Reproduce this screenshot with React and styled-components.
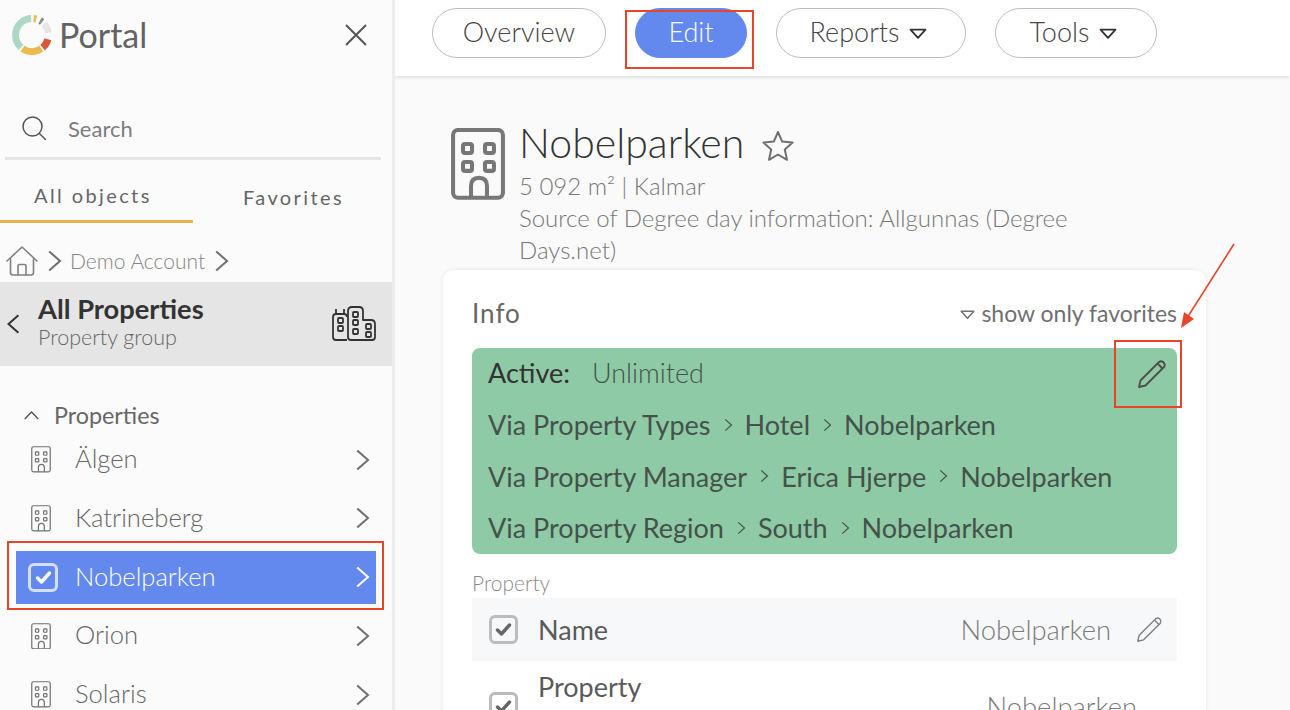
import React from 'react';
import styled, { createGlobalStyle } from 'styled-components';

const GlobalStyle = createGlobalStyle`
  html, body {
    margin: 0;
    padding: 0;
    height: 100%;
    overflow: hidden;
    background: #fafafa;
  }
  * { box-sizing: border-box; }
`;

const Page = styled.div`
  display: flex;
  width: 1290px;
  height: 710px;
  overflow: hidden;
  font-family: 'Lato', 'Noto Sans', sans-serif;
  color: #555;
`;

/* sidebar */
const Sidebar = styled.aside`
  flex: 0 0 395px;
  height: 710px;
  overflow: hidden;
  background: #fbfbfb;
  border-right: 3px solid #ededed;
`;

const Brand = styled.div`
  display: flex;
  align-items: center;
  height: 70px;
  padding: 0 25px 0 11px;
`;

const BrandName = styled.span`
  flex: 1;
  margin: -2px 0 0 6px;
  font-size: 34px;
  font-weight: 400;
  color: #636363;
`;

const SearchBar = styled.div`
  display: flex;
  align-items: center;
  gap: 22px;
  height: 61px;
  margin: 29px 11px 0 5px;
  padding-left: 17px;
  border-bottom: 3px solid #e5e5e5;
  font-size: 22px;
  font-weight: 400;
  color: #7d7d7d;
`;

const Tabs = styled.div`
  display: flex;
  height: 63px;
  margin-right: -1px;
`;

const Tab = styled.div`
  flex: 0 0 ${(p) => p.$width}px;
  padding-top: ${(p) => (p.$active ? 23 : 25)}px;
  padding-left: ${(p) => p.$inset}px;
  border-bottom: 3px solid ${(p) => (p.$active ? '#e5b44f' : 'transparent')};
  font-size: 20px;
  letter-spacing: 2.4px;
  color: #666;
`;

const Breadcrumb = styled.div`
  display: flex;
  align-items: center;
  gap: 4px;
  height: 59px;
  padding: 16px 0 0 6px;
  font-size: 21px;
  font-weight: 300;
  color: #858585;
`;

const GroupHeader = styled.div`
  display: flex;
  align-items: center;
  height: 84px;
  padding: 0 16px 0 3px;
  background: #e5e5e5;
`;

const GroupText = styled.div`
  flex: 1;
  margin: -4px 0 0 13px;
`;

const GroupTitle = styled.div`
  font-size: 27.3px;
  line-height: 30px;
  font-weight: 700;
  color: #333;
`;

const GroupSub = styled.div`
  font-size: 21.5px;
  line-height: 26px;
  font-weight: 300;
  color: #666;
`;

const SectionTitle = styled.div`
  display: flex;
  align-items: center;
  gap: 14px;
  height: 26px;
  margin-top: 36px;
  padding-left: 23px;
  font-size: 23.3px;
  color: #666;
`;

const ItemList = styled.div`
  margin-top: 5px;
  padding: 0 16px;
`;

const Item = styled.div`
  display: flex;
  align-items: center;
  height: 53px;
  margin-bottom: 5.8px;
  padding: 0 2px 0 15px;
  background: ${(p) => (p.$active ? '#6389ee' : 'transparent')};
  color: ${(p) => (p.$active ? '#fff' : '#666')};
  position: relative;
`;

const ItemName = styled.span`
  flex: 1;
  margin: 0 0 3px ${(p) => (p.$active ? 17 : 24)}px;
  font-size: 25.6px;
  font-weight: 300;
`;

const Highlight = styled.div`
  position: absolute;
  top: ${(p) => p.$top}px;
  right: ${(p) => p.$right}px;
  bottom: ${(p) => p.$bottom}px;
  left: ${(p) => p.$left}px;
  border: 2px solid #e8442a;
  pointer-events: none;
`;

/* main */
const Main = styled.main`
  flex: 1;
  height: 710px;
  overflow: hidden;
  background: #fafafa;
  position: relative;
`;

const TopBar = styled.nav`
  display: flex;
  align-items: flex-start;
  gap: 29px;
  height: 76px;
  padding: 8px 0 0 37px;
  background: #fff;
  box-shadow: 0 1px 4px rgba(0, 0, 0, 0.14);
`;

const NavButton = styled.div`
  display: flex;
  align-items: center;
  justify-content: center;
  gap: 10px;
  width: ${(p) => p.$width}px;
  height: 50px;
  padding-bottom: 3px;
  border-radius: 25px;
  border: 1px solid ${(p) => (p.$active ? '#6389ee' : '#bdbdbd')};
  background: ${(p) => (p.$active ? '#6389ee' : '#fff')};
  color: ${(p) => (p.$active ? '#fff' : '#444')};
  font-size: 27px;
  font-weight: 300;
  position: relative;

  svg {
    margin: 5px 5px 0 0;
  }
`;

const Content = styled.div`
  padding: 50px 84px 0 48px;
`;

const TitleBlock = styled.div`
  display: flex;
  gap: 14px;
  padding-left: 8px;
`;

const TitleIcon = styled.div`
  margin-top: 2px;
`;

const TitleText = styled.div`
  width: 570px;
`;

const TitleRow = styled.div`
  display: flex;
  align-items: flex-start;
  gap: 17px;
  height: 44px;
`;

const Title = styled.h1`
  margin: 0;
  font-size: 41px;
  line-height: 34px;
  font-weight: 300;
  color: #333;
`;

const StarSlot = styled.div`
  margin-top: 3px;
`;

const Meta = styled.div`
  font-size: 24px;
  line-height: 32px;
  font-weight: 300;
  color: #777;
`;

const Card = styled.section`
  height: 500px;
  margin-top: 4px;
  padding: 23px 29px 0;
  background: #fff;
  border-radius: 10px;
  box-shadow: 0 0 4px rgba(0, 0, 0, 0.08);
`;

const CardHead = styled.div`
  display: flex;
  align-items: center;
  justify-content: space-between;
  height: 40px;
`;

const CardTitle = styled.div`
  font-size: 26px;
  letter-spacing: 1px;
  color: #666;
`;

const FavFilter = styled.div`
  display: flex;
  align-items: center;
  gap: 6px;
  font-size: 23px;
  color: #707070;

  svg {
    margin-top: 3px;
  }
`;

const ActiveBox = styled.div`
  margin-top: 15px;
  height: 206px;
  padding: 0 16px;
  background: #8ecaa5;
  border-radius: 8px;
  color: #45524b;
  position: relative;
`;

const ActiveRow = styled.div`
  display: flex;
  align-items: center;
  gap: 10px;
  height: 51.7px;
  padding-bottom: 2px;
  font-size: 27px;
`;

const ActiveLabel = styled.span`
  color: #333;
  margin-right: 12px;
`;

const ActiveValue = styled.span`
  flex: 1;
  font-weight: 300;
`;

const EditSlot = styled.div`
  position: absolute;
  top: -8px;
  right: -5px;
  width: 68px;
  height: 68px;
  padding-left: 8px;
  display: flex;
  align-items: center;
  justify-content: center;
  border: 2px solid #e8442a;
`;

const FieldLabel = styled.div`
  margin-top: 16px;
  height: 28px;
  font-size: 21px;
  font-weight: 300;
  color: #8b8b8b;
`;

const FieldRow = styled.div`
  display: flex;
  align-items: center;
  min-height: ${(p) => (p.$tall ? 90 : 63)}px;
  padding: 0 14px 0 17px;
  background: ${(p) => (p.$shaded ? '#f7f8fa' : 'transparent')};
`;

const FieldName = styled.span`
  flex: 1;
  margin-left: 20px;
  padding-bottom: ${(p) => (p.$raised ? 38 : 0)}px;
  font-size: 27px;
  line-height: 38px;
  color: #5a5a5a;
`;

const FieldValue = styled.span`
  font-size: 27.4px;
  font-weight: 300;
  color: #7a7a7a;
  margin-right: ${(p) => p.$gap}px;
`;

const Checkbox = styled.span`
  display: flex;
  align-items: center;
  justify-content: center;
  width: 29px;
  height: 29px;
  border: 3px solid #bcbcbc;
  border-radius: 6px;
`;

const ActiveCheck = styled.span`
  display: flex;
  align-items: center;
  justify-content: center;
  width: 30px;
  height: 29px;
  margin-left: -3px;
  border: 3px solid #d5dffa;
  border-radius: 6px;
`;

const Arrow = styled.svg`
  position: absolute;
  left: 780px;
  top: 240px;
  pointer-events: none;
`;

/* drawings */
const LOGO_SEGMENTS = [
  { from: 221, to: 357, color: '#aed8c6' },
  { from: 146, to: 215, color: '#ecb94d' },
  { from: 105, to: 140, color: '#d9583a' },
  { from: 47, to: 82, color: '#e6e6e6' },
  { from: 29, to: 38, color: '#8b8b8b' },
  { from: 6, to: 15, color: '#ecb94d' },
];

const logoPoint = (deg) => {
  const a = (deg * Math.PI) / 180;
  return `${(21 + 16.5 * Math.sin(a)).toFixed(2)} ${(21 - 16.5 * Math.cos(a)).toFixed(2)}`;
};

const Logo = () => (
  <svg width="42" height="42" viewBox="0 0 42 42" fill="none" strokeWidth="7">
    {LOGO_SEGMENTS.map((s) => (
      <path
        key={s.from}
        d={`M${logoPoint(s.from)}A16.5 16.5 0 0 1 ${logoPoint(s.to)}`}
        stroke={s.color}
      />
    ))}
  </svg>
);

const CloseIcon = () => (
  <svg width="22" height="22" viewBox="0 0 22 22" stroke="#555" strokeWidth="2" fill="none">
    <path d="M1 1L21 21M21 1L1 21" />
  </svg>
);

const SearchIcon = () => (
  <svg width="24" height="24" viewBox="0 0 24 24" stroke="#555" strokeWidth="1.5" fill="none">
    <circle cx="10.5" cy="10.5" r="9.5" />
    <path d="M17 17L24 24" />
  </svg>
);

const HomeIcon = () => (
  <svg width="32" height="30" viewBox="0 0 32 30" stroke="#808080" strokeWidth="1.6" fill="none" strokeLinejoin="round" strokeLinecap="round">
    <path d="M1 15L16 1L31 15" />
    <path d="M4.5 13V26.5Q4.5 29 7 29H25Q27.5 29 27.5 26.5V13" />
    <path d="M12 29V20Q12 18.5 13.5 18.5H18.5Q20 18.5 20 20V29" />
  </svg>
);

const Chevron = ({ dir = 'right', size = 20, color = '#707070', weight = 1.7 }) => {
  const paths = {
    right: 'M6 2L15 10L6 18',
    left: 'M14 2L5 10L14 18',
    up: 'M2 14L10 6L18 14',
  };
  return (
    <svg width={size} height={size} viewBox="0 0 20 20" fill="none" stroke={color} strokeWidth={weight}>
      <path d={paths[dir]} />
    </svg>
  );
};

const BuildingIcon = ({ size = 20, color = '#707070', weight = 1.2 }) => (
  <svg width={size} height={size * 1.33} viewBox="0 0 54 72" fill="none" stroke={color} strokeWidth={weight * 2.7} strokeLinejoin="round">
    <rect x="2" y="2" width="50" height="68" rx="5" />
    <rect x="12" y="16" width="9" height="9" rx="2" />
    <rect x="34" y="16" width="9" height="9" rx="2" />
    <rect x="12" y="34" width="9" height="9" rx="2" />
    <rect x="34" y="34" width="9" height="9" rx="2" />
    <path d="M20 70V58Q20 50 28 50Q36 50 36 58V70" />
  </svg>
);

const GroupIcon = () => (
  <svg width="44" height="36" viewBox="0 0 44 36" fill="none" stroke="#333" strokeWidth="1.8" strokeLinejoin="round">
    <path d="M4 3V8M12 3V8" />
    <path d="M15 34H4Q1 34 1 31V11Q1 8 4 8H12Q15 8 15 11" />
    <rect x="6" y="12" width="5" height="5" rx="1" />
    <rect x="6" y="20" width="5" height="5" rx="1" />
    <path d="M16 31V5Q16 1 20 1H27Q31 1 31 5V14H39Q43 14 43 18V31Q43 34 40 34H19Q16 34 16 31Z" />
    <rect x="21" y="6" width="5" height="5" rx="1" />
    <rect x="21" y="14" width="5" height="5" rx="1" />
    <rect x="21" y="23" width="5" height="5" rx="1" />
    <rect x="34" y="18" width="5" height="5" rx="1" />
    <rect x="34" y="26" width="5" height="5" rx="1" />
  </svg>
);

const Caret = ({ color = '#333', width = 18, weight = 1.8 }) => (
  <svg width={width} height={width * 0.62} viewBox="0 0 18 11" fill="none" stroke={color} strokeWidth={weight} strokeLinejoin="round">
    <path d="M1.5 1.5H16.5L9 9.7Z" />
  </svg>
);

const Star = () => (
  <svg width="34" height="34" viewBox="0 0 34 34" fill="none" stroke="#707070" strokeWidth="2" strokeLinejoin="round">
    <path d="M17 3L21.2 12.6L31.6 13.6L23.8 20.5L26 30.8L17 25.5L8 30.8L10.2 20.5L2.4 13.6L12.8 12.6Z" />
  </svg>
);

const Pencil = ({ color = '#4d4d4d', weight = 1.8, size = 30 }) => (
  <svg width={size} height={size} viewBox="0 0 30 30" fill="none" stroke={color} strokeWidth={weight} strokeLinejoin="round">
    <path d="M2 28L3.5 21.5L22 3Q24 1.5 26 3L27 4Q28.5 6 27 8L8.5 26.5Z" />
    <path d="M20.5 4.5L25.5 9.5" />
  </svg>
);

const CheckMark = ({ color = '#666', size = 17 }) => (
  <svg width={size} height={size} viewBox="0 0 17 17" fill="none" stroke={color} strokeWidth="3.4" strokeLinecap="round" strokeLinejoin="round">
    <path d="M2.5 9L6.5 13L14.5 4" />
  </svg>
);

const PROPERTIES = ['Älgen', 'Katrineberg', 'Nobelparken', 'Orion', 'Solaris'];

const ROUTES = [
  ['Via Property Types', 'Hotel'],
  ['Via Property Manager', 'Erica Hjerpe'],
  ['Via Property Region', 'South'],
];

const App = () => (
  <>
    <GlobalStyle />
    <Page>
      <Sidebar>
        <Brand>
          <Logo />
          <BrandName>Portal</BrandName>
          <CloseIcon />
        </Brand>
        <SearchBar>
          <SearchIcon />
          Search
        </SearchBar>
        <Tabs>
          <Tab $active $width={193} $inset={34}>All objects</Tab>
          <Tab $width={200} $inset={50}>Favorites</Tab>
        </Tabs>
        <Breadcrumb>
          <HomeIcon />
          <Chevron size={24} />
          <span>Demo Account</span>
          <Chevron size={24} />
        </Breadcrumb>
        <GroupHeader>
          <Chevron dir="left" size={22} color="#333" weight={1.8} />
          <GroupText>
            <GroupTitle>All Properties</GroupTitle>
            <GroupSub>Property group</GroupSub>
          </GroupText>
          <GroupIcon />
        </GroupHeader>
        <SectionTitle>
          <Chevron dir="up" size={17} color="#555" />
          Properties
        </SectionTitle>
        <ItemList>
          {PROPERTIES.map((name) => {
            const active = name === 'Nobelparken';
            return (
              <Item key={name} $active={active}>
                {active ? (
                  <ActiveCheck>
                    <CheckMark color="#fff" />
                  </ActiveCheck>
                ) : (
                  <BuildingIcon />
                )}
                <ItemName $active={active}>{name}</ItemName>
                <Chevron color={active ? '#fff' : '#707070'} size={24} />
                {active && <Highlight $top={-10} $right={-8} $bottom={-6} $left={-9} />}
              </Item>
            );
          })}
        </ItemList>
      </Sidebar>
      <Main>
        <TopBar>
          <NavButton $width={174}>Overview</NavButton>
          <NavButton $width={112} $active>
            Edit
            <Highlight $top={1} $right={-8} $bottom={-12} $left={-11} />
          </NavButton>
          <NavButton $width={190}>Reports <Caret /></NavButton>
          <NavButton $width={162}>Tools <Caret /></NavButton>
        </TopBar>
        <Content>
          <TitleBlock>
            <TitleIcon>
              <BuildingIcon size={54} color="#777" weight={1.5} />
            </TitleIcon>
            <TitleText>
              <TitleRow>
                <Title>Nobelparken</Title>
                <StarSlot>
                  <Star />
                </StarSlot>
              </TitleRow>
              <Meta>5 092 m² | Kalmar</Meta>
              <Meta>Source of Degree day information: Allgunnas (Degree Days.net)</Meta>
            </TitleText>
          </TitleBlock>
          <Card>
            <CardHead>
              <CardTitle>Info</CardTitle>
              <FavFilter>
                <Caret color="#707070" width={15} />
                show only favorites
              </FavFilter>
            </CardHead>
            <ActiveBox>
              <ActiveRow>
                <ActiveLabel>Active:</ActiveLabel>
                <ActiveValue>Unlimited</ActiveValue>
              </ActiveRow>
              {ROUTES.map(([via, owner]) => (
                <ActiveRow key={via}>
                  {via}
                  <Chevron size={14} color="#45524b" />
                  {owner}
                  <Chevron size={14} color="#45524b" />
                  Nobelparken
                </ActiveRow>
              ))}
              <EditSlot>
                <Pencil />
              </EditSlot>
            </ActiveBox>
            <FieldLabel>Property</FieldLabel>
            <FieldRow $shaded>
              <Checkbox><CheckMark /></Checkbox>
              <FieldName>Name</FieldName>
              <FieldValue $gap={25}>Nobelparken</FieldValue>
              <Pencil color="#808080" weight={1.6} size={27} />
            </FieldRow>
            <FieldRow $tall>
              <Checkbox><CheckMark /></Checkbox>
              <FieldName $raised>Property</FieldName>
              <FieldValue $gap={26}>Nobelparken</FieldValue>
            </FieldRow>
          </Card>
        </Content>
        <Arrow width="70" height="100" viewBox="0 0 70 100">
          <path d="M59 4L12 78" stroke="#e8442a" strokeWidth="1.6" fill="none" />
          <path d="M6 88L9 72L19 79Z" fill="#e8442a" />
        </Arrow>
      </Main>
    </Page>
  </>
);

export default App;
